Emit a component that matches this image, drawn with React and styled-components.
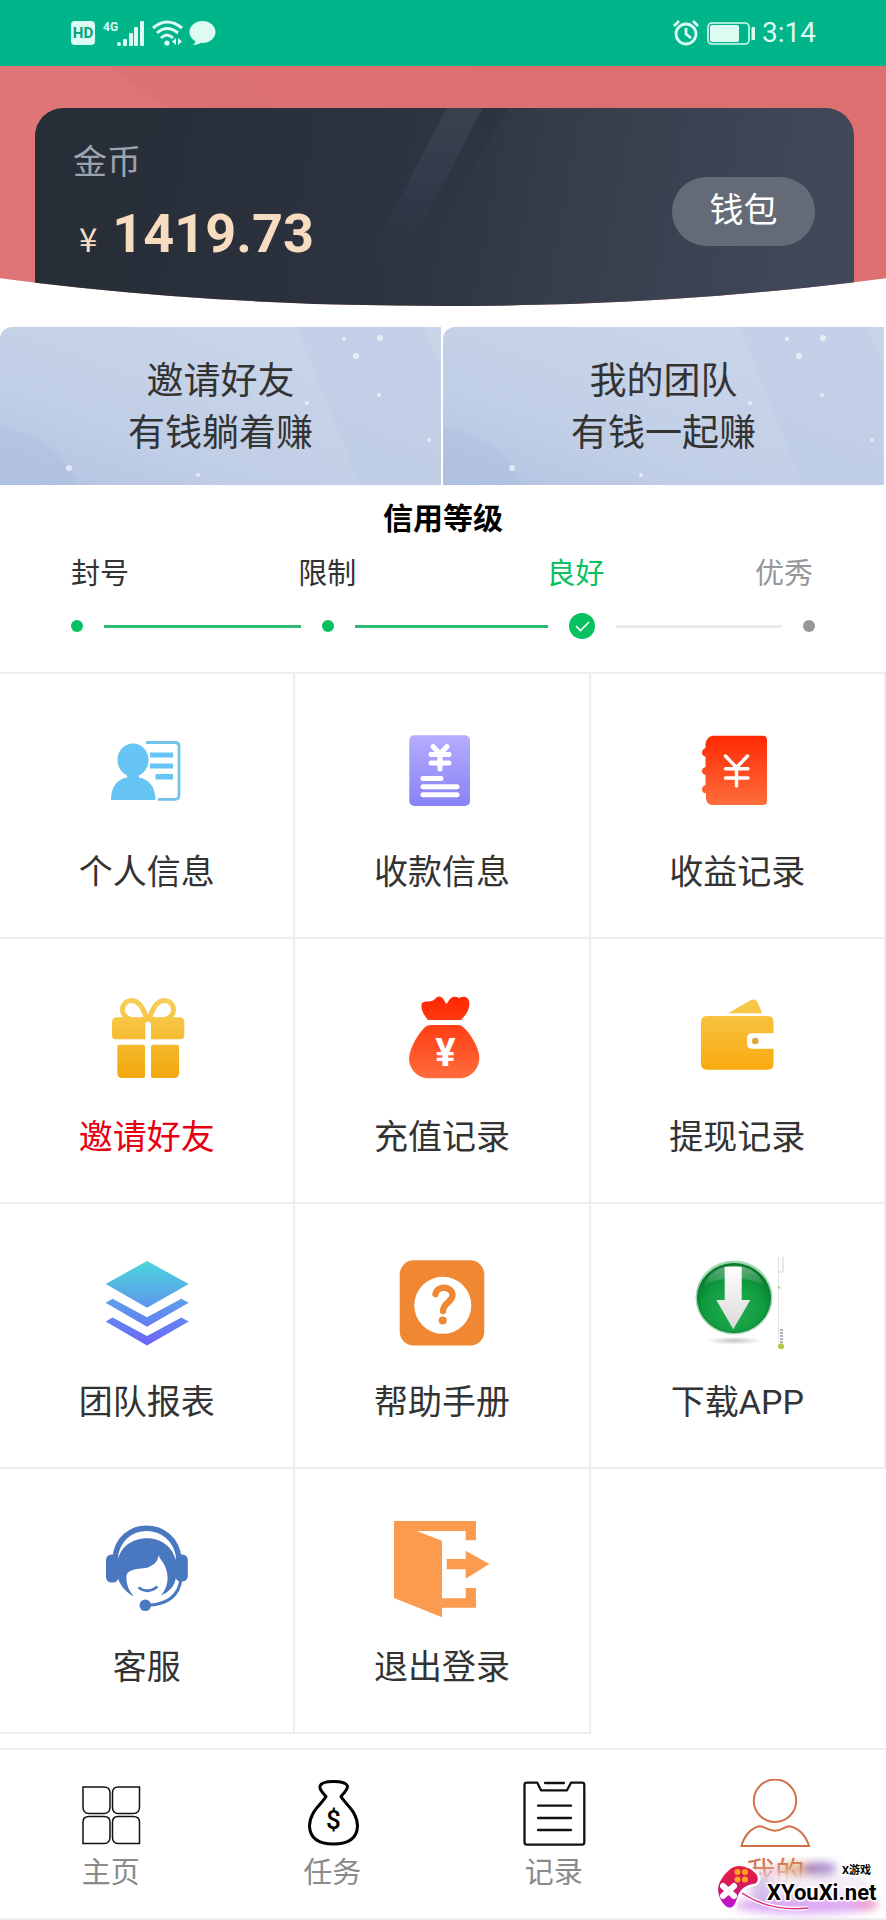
import React from 'react'
import styled, { createGlobalStyle } from 'styled-components'


const GlobalStyle = createGlobalStyle`
    * {
        box-sizing: border-box;
    }
    body {
        margin: 0;
        background: #fff;
        color: #333;
        font-family: Roboto, 'Noto Sans CJK SC', sans-serif;
    }
    a {
        color: inherit;
        text-decoration: none;
    }
`

const Page = styled.div`
    position: relative;
    width: 100%;
`

/* status bar */

const StatusBar = styled.header`
    display: flex;
    align-items: center;
    justify-content: space-between;
    height: 66px;
    padding: 0 70px;
    background: #00b58a;
    color: #dcfbf2;
`

const StatusGroup = styled.div`
    display: flex;
    align-items: center;
    gap: 6px;
`

const Clock = styled.span`
    font-size: 28px;
    line-height: 32px;
`

/* balance card */

const Hero = styled.section`
    height: 240px;
    padding: 42px 32px 0 35px;
    background: linear-gradient(215deg, #dd6f70 30%, #dc7172 63%, #de7677 64%);
    clip-path: ellipse(107% 100% at 50% 0);
`

const Card = styled.div`
    position: relative;
    display: flex;
    justify-content: space-between;
    align-items: flex-start;
    height: 100%;
    padding: 34px 39px 0 38px;
    border-radius: 28px 28px 0 0;
    background: linear-gradient(100deg, #272e38 10%, #2d333f 45%, #363e4b 65%, #41485a 95%);
`

const Streaks = styled.svg`
    position: absolute;
    left: 0;
    top: 0;
`

const Balance = styled.div`
    position: relative;
    display: flex;
    flex-direction: column;
    gap: 20px;
`

const BalanceLabel = styled.span`
    font-size: 34px;
    line-height: 40px;
    color: #9da3ad;
`

const Amount = styled.strong`
    display: flex;
    align-items: baseline;
    gap: 15px;
    padding-left: 6px;
    font-size: 54px;
    line-height: 64px;
    color: #f8dcc0;
`

const Currency = styled.span`
    font-family: 'Noto Sans CJK SC', sans-serif;
    font-size: 33px;
    font-weight: 400;
    line-height: 40px;
`

const WalletButton = styled.button`
    position: relative;
    width: 143px;
    height: 69px;
    margin-top: 35px;
    padding: 0 0 8px;
    border: 0;
    border-radius: 35px;
    background: #646b77;
    color: #fff;
    font-family: inherit;
    font-size: 34px;
`

/* banners */

const Banners = styled.div`
    display: grid;
    grid-template-columns: 1fr 1fr;
    gap: 2px;
    padding: 21px 2px 0 0;
`

const BannerLink = styled.a`
    position: relative;
    display: flex;
    flex-direction: column;
    align-items: center;
    height: 158px;
    padding-top: 29px;
    overflow: hidden;
    border-top-left-radius: 12px;
    background: linear-gradient(20deg, #b3c2e1 0%, #c0cee6 30%, #c8d4e8 75%);
    font-size: 37px;
    line-height: 52px;
`

const BannerArt = styled.svg`
    position: absolute;
    left: 0;
    top: 0;
    width: 100%;
    height: 100%;
`

const BannerText = styled.span`
    position: relative;
`

/* credit level */

const Credit = styled.section`
    padding: 14px 71px 0;
`

const CreditTitle = styled.h2`
    margin: 0;
    font-size: 30px;
    line-height: 40px;
    text-align: center;
    color: #000;
`

const Levels = styled.ol`
    display: grid;
    grid-template-columns: auto 170fr auto 191fr auto 151fr auto;
    margin: 0;
    padding: 15px 2px 0 0;
    list-style: none;
`

const Level = styled.li`
    grid-column: ${props => props.$index * 2 + 1};
    font-size: 29px;
    line-height: 40px;
    color: ${props => props.$color};
`

const Track = styled.div`
    display: flex;
    align-items: center;
    gap: 21px;
    height: 64px;
`

const Dot = styled.span`
    width: 12px;
    height: 12px;
    border-radius: 50%;
    background: ${props => props.$color};
`

const Line = styled.span`
    flex: ${props => props.$grow} 1 0;
    height: 3px;
    background: ${props => props.$color};
`

/* menu grid */

const Menu = styled.nav`
    display: grid;
    grid-template-columns: repeat(3, 1fr);
    margin-top: 14px;
    border-top: 2px solid #eee;
`

const Tile = styled.a`
    display: flex;
    flex-direction: column;
    align-items: center;
    gap: 28px;
    height: 265px;
    padding-top: 50px;
    border-right: 2px solid #eee;
    border-bottom: 2px solid #eee;
    color: ${props => props.$hot ? '#e60012' : '#333'};
    font-size: 34px;
    line-height: 48px;
`

const TileIcon = styled.svg`
    width: 96px;
    height: 96px;
    overflow: visible;
`

/* bottom tabs */

const Tabs = styled.nav`
    display: grid;
    grid-template-columns: repeat(4, 1fr);
    height: 172px;
    margin-top: 14px;
    padding-top: 29px;
    border-top: 2px solid #eee;
    border-bottom: 2px solid #eee;
`

const Tab = styled.a`
    display: flex;
    flex-direction: column;
    align-items: center;
    gap: 3px;
    font-size: 29px;
    line-height: 38px;
    color: ${props => props.$active ? '#d0714a' : '#8a8a8a'};
`

const TabIcon = styled.svg`
    width: 72px;
    height: 72px;
    fill: none;
`

const Watermark = styled.div`
    position: absolute;
    right: 0;
    bottom: 0;
    width: 180px;
    height: 64px;
    pointer-events: none;
`


const StatusIcons = () => (
    <StatusGroup>
        <svg width="26" height="26" viewBox="0 0 26 26">
            <rect x="1" y="1" width="24" height="24" rx="4" fill="#dcfbf2" />
            <text x="13" y="18" textAnchor="middle" fontSize="15" fontWeight="700" fill="#00a37c">HD</text>
        </svg>
        <svg width="44" height="28" viewBox="0 0 44 28" fill="#dcfbf2">
            <text x="1" y="12" fontSize="12" fontWeight="700">4G</text>
            <circle cx="17" cy="25" r="2" />
            <rect x="21" y="20" width="4" height="7" rx="1" />
            <rect x="27" y="14" width="4" height="13" rx="1" />
            <rect x="32" y="8" width="4" height="19" rx="1" />
            <rect x="38" y="2" width="4" height="25" rx="1" />
        </svg>
        <svg width="31" height="26" viewBox="0 0 31 26" fill="none" stroke="#dcfbf2" strokeWidth="3">
            <path d="M1 8 Q15 -4 30 8" />
            <path d="M5 13 Q15 4 26 13" />
            <path d="M9 18 Q15 12 21 18" />
            <circle cx="15" cy="23" r="2.6" fill="#dcfbf2" stroke="none" />
            <path d="M24 18 v7 l-4 -3.5z M26 18 v7 l4 -3.5z" fill="#dcfbf2" stroke="none" />
        </svg>
        <svg width="27" height="26" viewBox="0 0 27 26" fill="#dcfbf2">
            <ellipse cx="13.5" cy="12" rx="13" ry="11" />
            <path d="M5 18 Q8 22 4 25 Q10 25 14 21z" />
        </svg>
    </StatusGroup>
)

const StatusRight = () => (
    <StatusGroup>
        <svg width="28" height="28" viewBox="0 0 28 28" fill="none" stroke="#dcfbf2" strokeWidth="2.8">
            <circle cx="14" cy="15" r="10" />
            <path d="M14 9 v6 l5 4" />
            <path d="M2 7 L7 2 M21 2 l5 5" />
        </svg>
        <svg width="50" height="24" viewBox="0 0 50 24" fill="#dcfbf2">
            <rect x="2" y="2" width="41" height="21" rx="4" fill="none" stroke="#dcfbf2" strokeWidth="1.6" />
            <rect x="4" y="4" width="29" height="17" rx="2" />
            <rect x="45.5" y="6" width="3.5" height="13" rx="1" />
        </svg>
        <Clock>3:14</Clock>
    </StatusGroup>
)

const CardStreaks = () => (
    <Streaks width="520" height="198" viewBox="0 0 520 198" aria-hidden="true">
        <defs>
            <linearGradient id="streakLight" x1="0" y1="0" x2="0" y2="1">
                <stop offset="0" stopColor="#39414e" />
                <stop offset="0.5" stopColor="#33394a" />
                <stop offset="1" stopColor="#2d3340" stopOpacity="0" />
            </linearGradient>
            <linearGradient id="streakDark" x1="0" y1="0" x2="0" y2="1">
                <stop offset="0" stopColor="#2c333f" />
                <stop offset="1" stopColor="#2e3541" stopOpacity="0" />
            </linearGradient>
        </defs>
        <path d="M412 0 H448 L360 168 H324z" fill="url(#streakLight)" />
        <path d="M448 0 H473 L400 130 H380z" fill="url(#streakDark)" />
    </Streaks>
)

const starDots = [
    [344, 12, 2], [380, 11, 3], [356, 29, 3], [379, 68, 2],
    [307, 76, 2], [429, 113, 2], [69, 141, 3], [198, 148, 2]
]

const Banner = ({ lines }) => (
    <BannerLink href="#">
        <BannerArt viewBox="0 0 441 158" preserveAspectRatio="none" aria-hidden="true">
            <path d="M297 0 H424 L441 40 V158 H360z" fill="#b9c8e6" opacity="0.35" />
            <path d="M0 100 Q60 110 78 158 H0z" fill="#a9b9dd" opacity="0.35" />
            {starDots.map(([cx, cy, r]) => (
                <circle key={cx} cx={cx} cy={cy} r={r} fill="#fff" opacity="0.6" />
            ))}
        </BannerArt>
        {lines.map(line => <BannerText key={line}>{line}</BannerText>)}
    </BannerLink>
)

const VGradient = ({ id, from, to }) => (
    <linearGradient id={id} x1="0" y1="0" x2="0" y2="96" gradientUnits="userSpaceOnUse">
        <stop offset="0.08" stopColor={from} />
        <stop offset="0.9" stopColor={to} />
    </linearGradient>
)

const icons = {
    profile: (
        <g fill="#66c5f5">
            <ellipse cx="34" cy="36" rx="15.5" ry="16.5" />
            <path d="M12 76 C12 62 19 55 28 53.5 V50 H40 V53.5 C49 55 56.5 62 56.5 76z" />
            <path d="M47 18.5 H76 Q80 18.5 80 22.5 V71.5 Q80 75.3 76 75.3 H59" fill="none" stroke="#72c2ea" strokeWidth="2.8" />
            <rect x="51" y="28.5" width="23" height="5" />
            <rect x="51" y="39.5" width="23" height="5" />
            <rect x="56.5" y="50" width="17.5" height="5.5" />
        </g>
    ),
    receipt: (
        <g>
            <VGradient id="purple" from="#b6afff" to="#867ff5" />
            <rect x="15.3" y="11.3" width="60.7" height="70.7" rx="5" fill="url(#purple)" />
            <g stroke="#fff" strokeWidth="5" strokeLinecap="round" fill="none">
                <path d="M39 22.5 L46 30 L53 22.5 M46 30 V45 M37 30.5 H55 M37 39 H55" />
                <path d="M29 54.5 H47 M29 62.7 H63 M29 70.7 H63" />
            </g>
        </g>
    ),
    income: (
        <g>
            <VGradient id="redBook" from="#ff2600" to="#ff7240" />
            <path d="M24 11.7 H74 Q78 11.7 78 16 V77 Q78 81 74 81 H24 Q18 81 17 75 V69.5 Q13 69 13 65.5 Q13 62 16.5 61 V51 Q13 50 13 47 Q13 44 16.5 43 V32.5 Q13 32 13 28.7 Q13 25 16.5 24 V20 Q18 12 24 11.7z" fill="url(#redBook)" />
            <path d="M36.5 32 L47.5 43.5 L58.5 32 M47.5 43.5 V62 M36.5 44.7 H59 M36.5 54 H59" stroke="#fff" strokeWidth="3.4" strokeLinecap="round" fill="none" />
        </g>
    ),
    gift: (
        <g>
            <VGradient id="gold" from="#fad05c" to="#f2a90c" />
            <g fill="none" stroke="url(#gold)" strokeWidth="5">
                <path d="M47 31 H34 C20 29 20 12 33 11.5 C41 12 45 20 48 31" />
                <path d="M50 31 H64 C78 29 78 12 65 11.5 C57 12 53 20 50 31" />
            </g>
            <path d="M18 28.3 H80 Q85.3 28.3 85.3 33 V46 Q85.3 50.3 81 50.3 H52 V35 Q52 32.5 49 32.5 Q46.3 32.5 46.3 35 V50.3 H17 Q13 50.3 13 46 V33 Q13 28.3 18 28.3z" fill="url(#gold)" />
            <path d="M20 55.7 H44 Q46 55.7 46 58 V87 Q46 89 44 89 H23 Q18.3 89 18.3 84 V57.5 Q18.3 55.7 20 55.7z" fill="url(#gold)" />
            <path d="M54 55.7 H78 Q80 55.7 80 58 V84 Q80 89 75 89 H54 Q52 89 52 87 V58 Q52 55.7 54 55.7z" fill="url(#gold)" />
        </g>
    ),
    bag: (
        <g>
            <VGradient id="redBag" from="#ff2600" to="#ff6a3a" />
            <path d="M34 31 C29 25 26 19 28 14 C31 11 37 14 41 10 C45 5 49 8 51.5 14 Q52.5 15.5 54 13 C57 7 61 7 65 9 C71 6 76 9 75.3 16 C75 22 71 27 67 31z" fill="url(#redBag)" />
            <path d="M37 36 H65 Q69 37 74 43 C81 52 85.3 62 85.3 69 C85.3 79 77 89.3 66 89.3 H35 C23 89.3 15 80 15 69 C16 58 24 45 31 38 Q34 36 37 36z" fill="url(#redBag)" />
            <text x="51.5" y="77" textAnchor="middle" fontSize="38" fontWeight="700" fill="#fff">¥</text>
        </g>
    ),
    wallet: (
        <g>
            <VGradient id="amber" from="#f8cb50" to="#f8a80a" />
            <path d="M39 24.3 L62 11 Q67 9 69 14 L73 24.3z" fill="url(#amber)" />
            <path d="M18 27 H79 Q84.5 27 84.5 33 V44.3 H63 Q58 44.3 58 49 V55 Q58 59.7 63 59.7 H84.5 V75 Q84.5 80.7 79 80.7 H18 Q12 80.7 12 75 V33 Q12 27 18 27z" fill="url(#amber)" />
            <circle cx="66.3" cy="52" r="3.3" fill="#dfa636" />
        </g>
    ),
    layers: (
        <g>
            <VGradient id="ocean" from="#4bd5da" to="#6c69f8" />
            <path d="M48 7 L89.7 30 L48 53.7 L6.7 30z" fill="url(#ocean)" />
            <path d="M6.6 48.7 L13.6 44.7 L48 63.3 L82.3 44.7 L89.7 48.7 L48 72.7z" fill="url(#ocean)" />
            <path d="M6.6 67.4 L13.6 63.4 L48 82 L82.3 63.4 L89.7 67.4 L48 91.4z" fill="url(#ocean)" />
        </g>
    ),
    help: (
        <g>
            <rect x="5.7" y="6.3" width="84.6" height="85.2" rx="14" fill="#f08833" />
            <circle cx="48.8" cy="51.3" r="28.5" fill="#fff" />
            <path d="M41.5 40 C43 31 58 32 58.5 41 C58.5 48 49 49 49 57" fill="none" stroke="#ee8835" strokeWidth="6.4" strokeLinecap="round" />
            <circle cx="48.7" cy="66.5" r="4" fill="#ee8835" />
        </g>
    ),
    download: (
        <g>
            <radialGradient id="orb" cx="0.5" cy="0.65" r="0.6">
                <stop offset="0" stopColor="#22b050" />
                <stop offset="0.7" stopColor="#0f9a3f" />
                <stop offset="1" stopColor="#067a2c" />
            </radialGradient>
            <linearGradient id="shine" x1="0" y1="0" x2="0" y2="1">
                <stop offset="0" stopColor="#fff" stopOpacity="0.4" />
                <stop offset="1" stopColor="#fff" stopOpacity="0.05" />
            </linearGradient>
            <linearGradient id="arrow" x1="0" y1="0" x2="0" y2="1">
                <stop offset="0" stopColor="#fff" />
                <stop offset="1" stopColor="#d9d9d9" />
            </linearGradient>
            <radialGradient id="floor">
                <stop offset="0" stopColor="#c4c4c4" />
                <stop offset="1" stopColor="#fff" />
            </radialGradient>
            <ellipse cx="45" cy="86.7" rx="28" ry="4" fill="url(#floor)" />
            <ellipse cx="45" cy="43.5" rx="38.5" ry="37" fill="#a2d9b3" />
            <ellipse cx="45" cy="44" rx="36.5" ry="34.5" fill="url(#orb)" stroke="#0a7a30" strokeWidth="1" />
            <path d="M15 32 C22 5 68 5 75 32 C60 22 30 22 15 32z" fill="url(#shine)" />
            <path d="M35.7 12.7 H52.7 V46 H61.3 L44.3 75.3 L27.3 46 H35.7z" fill="url(#arrow)" />
            <path d="M89.5 3 V88" stroke="#e4e4e4" strokeWidth="1" />
            <path d="M94 3 V18 H90" fill="none" stroke="#d4d4d4" strokeWidth="1" />
            <path d="M92.5 75 V90" stroke="#b0b0b0" strokeWidth="3" strokeDasharray="2 1" />
            <circle cx="90" cy="33.5" r="1.3" fill="#b8d070" />
            <circle cx="92" cy="92.3" r="3" fill="#b3c945" />
        </g>
    ),
    service: (
        <g fill="#4a78c0">
            <path d="M16 40 C19 -1 76 -1 80 40" fill="none" stroke="#4a78c0" strokeWidth="5.5" />
            <rect x="7" y="35.5" width="12.5" height="28" rx="5.5" />
            <rect x="76.3" y="35.5" width="12.5" height="27" rx="5.5" />
            <path d="M18 46 C21 11 72 11 77 43 V58 C76 67 70 73 62 76.5 C69 68 70 59 67 50 C65 43 61 41 59.5 36 C59 43 54 47 47 49 C38 50 30 50 27.5 56 C27 64 29 71 35 77.5 C26 73 20 65 18 56z" />
            <path d="M39.5 68.5 Q48.5 75.5 58.5 67.5" fill="none" stroke="#4a78c0" strokeWidth="2.8" />
            <path d="M82 60 C80 76 69 85 50 86.3" fill="none" stroke="#4a78c0" strokeWidth="3" />
            <circle cx="46.3" cy="86.3" r="5.8" />
        </g>
    ),
    logout: (
        <g fill="#fb9b50">
            <path d="M0 2 H82 V21.3 H71.7 V12 H22.7 L48 21.7 V79.3 H71.7 V69 H82 V88.7 H48 V98.3 L0 79z" />
            <path d="M52.7 40 H71.7 V31.7 L95.3 45 L71.7 59.7 V50.3 H52.7z" />
        </g>
    )
}

const menuItems = [
    { label: '个人信息', icon: icons.profile },
    { label: '收款信息', icon: icons.receipt },
    { label: '收益记录', icon: icons.income },
    { label: '邀请好友', icon: icons.gift, hot: true },
    { label: '充值记录', icon: icons.bag },
    { label: '提现记录', icon: icons.wallet },
    { label: '团队报表', icon: icons.layers },
    { label: '帮助手册', icon: icons.help },
    { label: '下载APP', icon: icons.download },
    { label: '客服', icon: icons.service },
    { label: '退出登录', icon: icons.logout }
]

const tabItems = [
    {
        label: '主页',
        icon: (
            <g stroke="#111" strokeWidth="1.5">
                <path d="M8 8 H29 Q35 8 35 14 V28 Q35 34.5 29 34.5 H14 Q8 34.5 8 28z" />
                <path d="M64.5 8 H43 Q37.5 8 37.5 14 V28 Q37.5 34.5 43 34.5 H58 Q64.5 34.5 64.5 28z" />
                <path d="M8 64.5 H29 Q35 64.5 35 58 V43 Q35 37.5 29 37.5 H14 Q8 37.5 8 43z" />
                <path d="M64.5 64.5 H43 Q37.5 64.5 37.5 58 V43 Q37.5 37.5 43 37.5 H58 Q64.5 37.5 64.5 43z" />
            </g>
        )
    },
    {
        label: '任务',
        icon: (
            <g stroke="#000" strokeWidth="3" strokeLinejoin="round">
                <path d="M24 7 C26 1 49 1 51.5 7 C52 10 49 13 45 17.5 C50 26 61 32 61.5 47 C61 60 52 65 37.5 65 C22 65 14 59 13.5 47 C14 32 25 26 30 17.5 C26 13 23 10 24 7z" />
                <text x="37.5" y="50" textAnchor="middle" fontSize="26" fontWeight="500" fill="#000" stroke="none">$</text>
            </g>
        )
    },
    {
        label: '记录',
        icon: (
            <g stroke="#111" strokeWidth="2.3" strokeLinecap="round" strokeLinejoin="round">
                <path d="M19.3 3.7 H9 Q6.5 3.7 6.5 6 V63 Q6.5 65.7 9 65.7 H64 Q66.3 65.7 66.3 63 V6 Q66.3 3.7 64 3.7 H53 L49 11.3 H23z" stroke="none" />
                <path d="M19.3 3.7 H9 Q6.5 3.7 6.5 6 V63 Q6.5 65.7 9 65.7 H64 Q66.3 65.7 66.3 63 V6 Q66.3 3.7 64 3.7 H53 L49 11.3 H23z" />
                <path d="M27 4 H46 M20 26.7 H53 M20 39 H53 M20 51 H53" />
            </g>
        )
    },
    {
        label: '我的',
        active: true,
        icon: (
            <g stroke="#d0714a" strokeWidth="2">
                <circle cx="36" cy="21.7" r="21.2" />
                <path d="M2.5 67 C5 57 12 49 20.5 47.3 C26 47.5 29 51.5 36 51.7 C43 51.5 45 47.5 50.5 47.3 C60 49 67 57 70 67z" />
            </g>
        )
    }
]

const SiteMark = () => (
    <Watermark>
        <svg width="180" height="64" viewBox="0 0 180 64">
            <defs>
                <filter id="haze" x="-20%" y="-50%" width="140%" height="200%">
                    <feGaussianBlur stdDeviation="4" />
                </filter>
                <linearGradient id="pad" x1="0" y1="0" x2="0" y2="1">
                    <stop offset="0" stopColor="#e81e3c" />
                    <stop offset="0.5" stopColor="#d4195e" />
                    <stop offset="1" stopColor="#b813f0" />
                </linearGradient>
            </defs>
            <g filter="url(#haze)">
                <rect x="44" y="18" width="118" height="30" rx="8" fill="#f6ecf8" opacity="0.95" />
                <ellipse cx="64" cy="15" rx="16" ry="5" fill="#e8a0a8" opacity="0.5" />
                <ellipse cx="92" cy="13" rx="18" ry="7" fill="#dc9c62" opacity="0.7" />
                <ellipse cx="114" cy="13" rx="17" ry="7" fill="#8458bc" opacity="0.7" />
                <ellipse cx="100" cy="49" rx="72" ry="9" fill="#d596f0" opacity="0.8" />
                <ellipse cx="160" cy="47" rx="12" ry="7" fill="#f08ab4" opacity="0.6" />
                <ellipse cx="56" cy="34" rx="12" ry="12" fill="#b79ae0" opacity="0.5" />
            </g>
            <path d="M36 37 Q64 56 102 52" fill="none" stroke="#fff" strokeWidth="4" />
            <path d="M36 37 Q64 56 102 52" fill="none" stroke="#e02c88" strokeWidth="1.5" />
            <path d="M27 10 C34 7 44 10 49 15 C55 20 54 28 48 29 C42 30 37 32 34 38 C31 45 30 53 24 53 C16 52 10 40 11 31 C12 24 20 13 27 10z" fill="url(#pad)" stroke="#fff" strokeWidth="2.5" />
            <path d="M17 30 L28 40 M28 30 L17 40" stroke="#fff" strokeWidth="6" strokeLinecap="round" />
            <g fill="#ffa51f">
                <circle cx="31.5" cy="16" r="3" />
                <circle cx="39" cy="16" r="3" />
                <circle cx="31.5" cy="23.5" r="3" />
                <circle cx="39" cy="23.5" r="3" />
            </g>
            <g fill="#000" stroke="#fff" strokeWidth="3" strokeLinejoin="round" paintOrder="stroke" fontWeight="700">
                <text x="136" y="18" fontSize="11">X游戏</text>
                <text x="61" y="44" fontSize="22">XYouXi.net</text>
            </g>
        </svg>
    </Watermark>
)


const App = () => {
    return (
        <Page>
            <GlobalStyle />

            <StatusBar>
                <StatusIcons />
                <StatusRight />
            </StatusBar>

            <main>
                <Hero>
                    <Card>
                        <CardStreaks />
                        <Balance>
                            <BalanceLabel>金币</BalanceLabel>
                            <Amount><Currency>¥</Currency>1419.73</Amount>
                        </Balance>
                        <WalletButton type="button">钱包</WalletButton>
                    </Card>
                </Hero>

                <Banners>
                    <Banner lines={['邀请好友', '有钱躺着赚']} />
                    <Banner lines={['我的团队', '有钱一起赚']} />
                </Banners>

                <Credit>
                    <CreditTitle>信用等级</CreditTitle>
                    <Levels>
                        <Level $index={0} $color="#333">封号</Level>
                        <Level $index={1} $color="#333">限制</Level>
                        <Level $index={2} $color="#07c160" aria-current="step">良好</Level>
                        <Level $index={3} $color="#969799">优秀</Level>
                    </Levels>
                    <Track aria-hidden="true">
                        <Dot $color="#07c160" />
                        <Line $grow={197} $color="#2fba73" />
                        <Dot $color="#07c160" />
                        <Line $grow={194} $color="#2fba73" />
                        <svg width="26" height="26" viewBox="0 0 26 26">
                            <circle cx="13" cy="13" r="13" fill="#07c160" />
                            <path d="M7 13 L11.5 17.5 L20 9" fill="none" stroke="#fff" strokeWidth="1.6" />
                        </svg>
                        <Line $grow={166} $color="#ebebeb" />
                        <Dot $color="#969799" />
                    </Track>
                </Credit>

                <Menu>
                    {
                        menuItems.map(item => (
                            <Tile href="#" key={item.label} $hot={item.hot}>
                                <TileIcon viewBox="0 0 96 96" aria-hidden="true">{item.icon}</TileIcon>
                                {item.label}
                            </Tile>
                        ))
                    }
                </Menu>
            </main>

            <Tabs>
                {
                    tabItems.map(item => (
                        <Tab href="#" key={item.label} $active={item.active}>
                            <TabIcon viewBox="0 0 72 72" aria-hidden="true">{item.icon}</TabIcon>
                            {item.label}
                        </Tab>
                    ))
                }
            </Tabs>
            <SiteMark />
        </Page>
    )
}

export default App
